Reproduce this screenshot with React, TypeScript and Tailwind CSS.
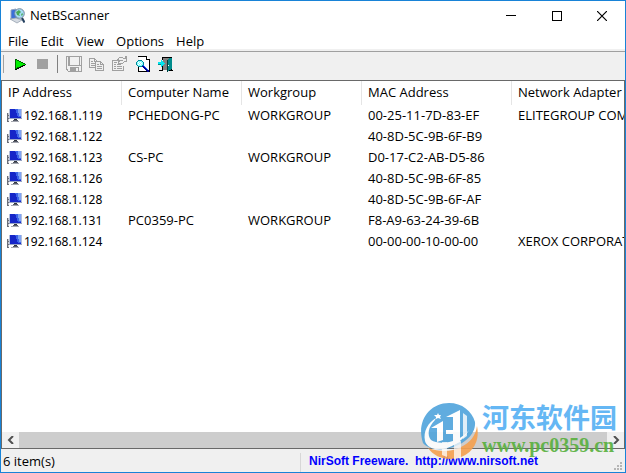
import type { ReactNode } from "react";

const menus = ["File", "Edit", "View", "Options", "Help"];
const columns = ["IP Address", "Computer Name", "Workgroup", "MAC Address", "Network Adapter Company"];
const hosts = [
  ["192.168.1.119", "PCHEDONG-PC", "WORKGROUP", "00-25-11-7D-83-EF", "ELITEGROUP COMPUTER"],
  ["192.168.1.122", "", "", "40-8D-5C-9B-6F-B9", ""],
  ["192.168.1.123", "CS-PC", "WORKGROUP", "D0-17-C2-AB-D5-86", ""],
  ["192.168.1.126", "", "", "40-8D-5C-9B-6F-85", ""],
  ["192.168.1.128", "", "", "40-8D-5C-9B-6F-AF", ""],
  ["192.168.1.131", "PC0359-PC", "WORKGROUP", "F8-A9-63-24-39-6B", ""],
  ["192.168.1.124", "", "", "00-00-00-10-00-00", "XEROX CORPORATION"],
];

function Icon({ children, crisp = true }: { children: ReactNode; crisp?: boolean }) {
  return (
    <svg className="block size-4 shrink-0" viewBox="0 0 16 16" fill="none" shapeRendering={crisp ? "crispEdges" : "auto"} aria-hidden="true">
      {children}
    </svg>
  );
}

function AppIcon() {
  return (
    <Icon crisp={false}>
      <path d="M2 2l5-1 1 9-6 1z" fill="#3a6fd8" stroke="#8fa4bf" />
      <path d="M1 11l6-1 6 2-5 3z" fill="#d4dae2" stroke="#8d99a8" strokeWidth=".7" />
      <circle cx="10.500" cy="5.500" r="4.800" fill="#a6dcf5" stroke="#75899d" strokeWidth="1" />
      <path d="M7 4l3-2 2 2-2 2 1 2-3-1zM13 5l1 1-1 2-1-1z" fill="#49a957" />
      <path d="M13 10l2.500 4.500" stroke="#24405f" strokeWidth="2.200" />
    </Icon>
  );
}

function HostIcon() {
  return (
    <Icon>
      <path d="M0 5h2v9H0z" fill="#c5c8d0" />
      <path d="M0 5h1v9H0zM1 7h1v1H1zM1 10h1v1H1zM0 13h2v1H0z" fill="#6a6e78" />
      <path d="M2 1h13v10H2z" fill="#b3bfdc" />
      <path d="M3 1h11v9H3z" fill="#1626c8" />
      <path d="M8 1h6v8h-3z" fill="#3c64e8" />
      <path d="M11 1h3v7h-2z" fill="#7fa4f4" />
      <path d="M2 10h13v1H2z" fill="#98a4c4" />
      <path d="M7 11h3v2H7z" fill="#32363f" />
      <path d="M4 13h8v1H4z" fill="#a5a8b0" />
      <path d="M6 12h5v1H6z" fill="#555a66" />
    </Icon>
  );
}

function PlayIcon() {
  return (
    <Icon>
      <path d="M4 3h1l10 5v1l-10 5H4z" fill="#006400" />
      <path d="M5 4l9 4.500L5 12z" fill="#00f000" />
      <path d="M4 13h2v-1h2v-1h2v-1h2V9h2v1h-2v1h-2v1H8v1H6v1H4z" fill="#000" />
    </Icon>
  );
}

function StopIcon() {
  return (
    <Icon>
      <path d="M3 3h11v10H3z" fill="#a0a0a0" />
    </Icon>
  );
}

function SaveIcon() {
  return (
    <Icon>
      <path d="M.500.500h15v15h-13l-2-2z" stroke="#a0a0a0" />
      <path d="M3 1h1v8h9V1h1v9H3zM2 1h1v9H2zM13 9h2v1h-2z" fill="#a0a0a0" />
      <path d="M4 11h9v4H4z" fill="#a0a0a0" />
      <path d="M10 12h2v3h-2z" fill="#efefef" />
      <path d="M1 13h1v1H1z" fill="#a0a0a0" />
    </Icon>
  );
}

function CopyIcon() {
  return (
    <Icon>
      <path d="M.500 2.500h5l3 3v6h-8zM5.500 2.500v3h3" stroke="#a0a0a0" />
      <path d="M2 5h2v1H2zM2 7h4v1H2zM2 9h4v1H2z" fill="#a0a0a0" />
      <path d="M6.500 5.500h5l3 3v6h-8z" fill="#efefef" stroke="#a0a0a0" />
      <path d="M11 6h1v2h2v1h-3zM8 8h2v1H8zM8 10h5v1H8zM8 12h5v1H8z" fill="#a0a0a0" />
    </Icon>
  );
}

function PropertiesIcon() {
  return (
    <Icon>
      <path d="M7 4.500H.500v10h11V10" stroke="#a0a0a0" />
      <path d="M2 8h2v1H2zM5 8h4v1H5zM2 10h2v1H2zM5 10h5v1H5zM2 12h2v1H2zM5 12h5v1H5zM2 6h3v1H2z" fill="#a0a0a0" />
      <path d="M5.500 3.500l2-2h3l1 1h2V.500h1v5h-2l-2 2h-3l-1 1v-2l1-2z" fill="#efefef" stroke="#a0a0a0" />
      <path d="M8 4h3v1H8z" fill="#a0a0a0" />
    </Icon>
  );
}

function FindIcon() {
  return (
    <Icon>
      <path d="M3.500.500h8l3 3v12h-11z" fill="#fff" />
      <path d="M3 0h8v1H3zM11 0h1v3h3v1h-4zM14 3h1v12h-1zM3 15h12v1H3zM3 10h1v6H3z" fill="#000" />
      <path d="M3 4h4v1h1v1h1v3H8v1H7v1H3v-1H2V9H1V6h1V5h1z" fill="#008b9b" />
      <path d="M3 5h4v1h1v3H7v1H3V9H2V6h1z" fill="#8ff" />
      <path d="M3 6h1v1H3zM5 6h1v1H5zM4 7h1v1H4zM6 7h1v1H6zM3 8h1v1H3zM5 8h1v1H5z" fill="#fff" />
      <path d="M8 9h1v1h1v1h1v1h1v1h1v1h1v2h-2v-1h-1v-1h-1v-1H9v-1H8v-1H7v-1h1z" fill="#000090" />
      <path d="M8 9h1v1h1v1h1v1h1v1h1v1h-1v-1h-1v-1h-1v-1H9v-1H8z" fill="#1060ff" />
    </Icon>
  );
}

function ExitIcon() {
  return (
    <Icon>
      <path d="M4 1h10v1H4zM4 1h1v3H4zM4 9h1v6H4zM1 14h4v1H1zM13 1h1v13h-1zM9 14h6v1H9z" fill="#000" />
      <path d="M5 2h6l-2 2v10H5z" fill="#808080" />
      <path d="M9 4l3-2h2v11l-5 3z" fill="#008b8b" />
      <path d="M9 4h1v12H9z" fill="#003c3c" />
      <path d="M10 9h1v1h-1z" fill="#fff" />
      <path d="M0 6h3V4h1v1h1v1h1v1h1v1H6v1H5v1H4v1H3V8H0z" fill="#00e5f0" />
      <path d="M0 8h3v1H0z" fill="#008b8b" />
    </Icon>
  );
}

function ToolButton({ label, children }: { label: string; children: ReactNode }) {
  return (
    <button type="button" aria-label={label} className="flex h-6 w-[23px] items-center justify-center">
      {children}
    </button>
  );
}

function Watermark() {
  return (
    <div className="pointer-events-none absolute right-2 bottom-3 flex items-center gap-1 opacity-90">
      <svg className="block size-[58px]" viewBox="0 0 58 58" aria-hidden="true">
        <path d="M3 41C-4 20 9 1 29 1c13 0 23 8 26 19 1 12-10 22-25 26C19 49 8 47 3 41z" fill="#4fa4dc" />
        <path d="M57 24c4 19-9 33-27 33-9 0-17-4-22-11 12 4 23 4 33-1 9-4 15-12 16-21z" fill="#f5a04e" />
        <path d="M5 39C3 29 8 21 16 16l-1 2C8 25 7 33 11 38c9 6 29 2 38-10-7 13-22 21-34 19-5-1-9-4-10-8z" fill="#fff" />
        <path d="M11 26l12-7v19l-6 2V26zM26 15l14-7v32l-7 3V15zM26 28h7v4h-7z" fill="#fff" />
        <path d="M43 11l4 3v20l-4 3z" fill="#fff" fillOpacity=".8" />
        <path d="M22 40h5v15l-5-2zM34 39h7v17l-7 1z" fill="#fff" fillOpacity=".75" />
        <path d="M18 11l1 2h2l-1 2 1 2-3-1-2 1v-2l-2-2h3z" fill="#fff" />
      </svg>
      <div className="flex flex-col whitespace-nowrap">
        <span className="font-['Noto_Sans_CJK_SC',sans-serif] text-[27px] leading-7 font-bold text-[#55b0f3]">河东软件园</span>
        <span className="font-['Liberation_Serif',serif] text-[20px] leading-7 font-bold text-[#58b03d]">www.pc0359.cn</span>
      </div>
    </div>
  );
}

export default function App() {
  return (
    <div className="relative flex h-screen flex-col overflow-hidden border border-[#1883d7] bg-[#f0f0f0] font-['Open_Sans',sans-serif] text-[13px] text-black">
      <header className="flex h-[30px] shrink-0 items-center bg-white pl-2">
        <AppIcon />
        <h1 className="flex-1 pl-[5px]">NetBScanner</h1>
        <button type="button" aria-label="Minimize" className="flex h-full w-[46px] items-center justify-center">
          <svg className="size-[10px]" viewBox="0 0 10 10" shapeRendering="crispEdges"><path d="M0 4h10v1H0z" /></svg>
        </button>
        <button type="button" aria-label="Maximize" className="flex h-full w-[45px] items-center justify-center">
          <svg className="size-[10px]" viewBox="0 0 10 10" fill="none" stroke="#000" shapeRendering="crispEdges"><path d="M.500.500h9v9h-9z" /></svg>
        </button>
        <button type="button" aria-label="Close" className="flex h-full w-[46px] items-center justify-center">
          <svg className="size-[10px]" viewBox="0 0 10 10" fill="none" stroke="#000" strokeWidth="1.200"><path d="M0 0l10 10M10 0L0 10" /></svg>
        </button>
      </header>
      <nav className="flex h-[18px] shrink-0 items-center gap-3 bg-white pt-[3px] pl-[7px]">
        {menus.map((m) => (
          <button key={m} type="button">{m}</button>
        ))}
      </nav>
      <div className="flex h-[31px] shrink-0 border-t-2 border-[#f0f0f0] bg-[#f0f0f0]">
        <div className="flex flex-1 items-center border-t border-[#a0a0a0] pb-1 pl-[2px]" role="toolbar">
          <span className="mr-[3px] h-[18px] w-px bg-[#a0a0a0]" />
          <ToolButton label="Start"><PlayIcon /></ToolButton>
          <ToolButton label="Stop"><StopIcon /></ToolButton>
          <span className="mx-1 h-[18px] w-px bg-[#808080]" />
          <ToolButton label="Save"><SaveIcon /></ToolButton>
          <ToolButton label="Copy"><CopyIcon /></ToolButton>
          <ToolButton label="Properties"><PropertiesIcon /></ToolButton>
          <ToolButton label="Find"><FindIcon /></ToolButton>
          <ToolButton label="Exit"><ExitIcon /></ToolButton>
        </div>
      </div>
      <main className="flex min-h-0 flex-1 flex-col border border-[#696969] bg-white">
        <div className="min-h-0 flex-1 overflow-hidden">
          <table className="w-[760px] table-fixed border-separate border-spacing-0 text-left whitespace-nowrap">
            <colgroup>
              <col className="w-[120px]" />
              <col className="w-[120px]" />
              <col className="w-[120px]" />
              <col className="w-[150px]" />
              <col />
            </colgroup>
            <thead>
              <tr className="h-6">
                {columns.map((c) => (
                  <th key={c} scope="col" className="border-r border-[#e5e5e5] pt-0 pb-[2px] pl-[6px] leading-[22px] font-normal">{c}</th>
                ))}
              </tr>
            </thead>
            <tbody>
              {hosts.map((row) => (
                <tr key={row[0]} className="h-[21px]">
                  {row.map((cell, i) =>
                    i === 0 ? (
                      <td key={i} className="py-0 pl-[5px] leading-[21px]">
                        <span className="flex items-center gap-px font-['Noto_Sans',sans-serif] text-[12px]">
                          <HostIcon />
                          {cell}
                        </span>
                      </td>
                    ) : (
                      <td key={i} className="py-0 pl-[6px] leading-[21px]">{cell}</td>
                    ),
                  )}
                </tr>
              ))}
            </tbody>
          </table>
        </div>
        <div className="flex h-4 shrink-0 bg-[#f0f0f0]">
          <button type="button" aria-label="Scroll left" className="flex w-[17px] items-center justify-center">
            <svg className="size-[8px]" viewBox="0 0 8 8" fill="none" stroke="#505050" strokeWidth="2"><path d="M6 0L2 4l4 4" /></svg>
          </button>
          <div className="flex-1 bg-[#cdcdcd]" />
          <button type="button" aria-label="Scroll right" className="flex w-[17px] items-center justify-center">
            <svg className="size-[8px]" viewBox="0 0 8 8" fill="none" stroke="#505050" strokeWidth="2"><path d="M2 0l4 4-4 4" /></svg>
          </button>
        </div>
      </main>
      <footer className="flex h-[23px] shrink-0 items-center bg-[#f0f0f0] pt-1">
        <span className="w-[299px] pb-[2px] pl-[2px]">6 item(s)</span>
        <span className="h-full w-px bg-[#d7d7d7]" />
        <a href="http://www.nirsoft.net" className="pb-1 pl-2 font-['Liberation_Sans',sans-serif] text-[12px] font-bold whitespace-pre text-[#0000ff]">{"NirSoft Freeware.  http://www.nirsoft.net"}</a>
        <svg className="mr-px ml-auto size-[10px] self-end" viewBox="0 0 10 10" fill="#b5b5b5" shapeRendering="crispEdges" aria-hidden="true">
          <path d="M6 0h2v2H6zM3 3h2v2H3zM6 3h2v2H6zM0 6h2v2H0zM3 6h2v2H3zM6 6h2v2H6z" />
        </svg>
      </footer>
      <Watermark />
    </div>
  );
}
